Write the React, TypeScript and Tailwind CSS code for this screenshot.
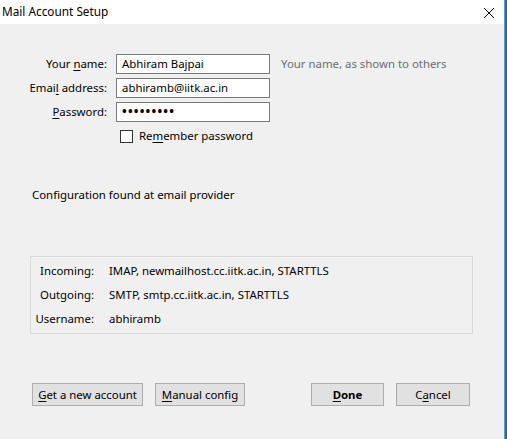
import React from "react";

const font = { fontFamily: '"Noto Sans", "Open Sans", sans-serif' };

function U({ children }: { children: React.ReactNode }) {
  return <span className="underline underline-offset-2">{children}</span>;
}

function Btn({ children, className = "" }: { children: React.ReactNode; className?: string }) {
  return (
    <div
      className={
        "h-[23px] flex items-center justify-center border border-[#adadad] bg-[#e1e1e1] text-[11.4px] leading-[16px] text-black " +
        className
      }
    >
      {children}
    </div>
  );
}

export default function App() {
  return (
    <div className="w-[507px] h-[439px] flex bg-[#f0f0f0] overflow-hidden" style={font}>
      <div className="flex-1 flex flex-col">
        {/* title bar */}
        <div className="h-[24px] bg-white flex items-center justify-between pl-[2px] pr-[9px]">
          <span className="text-[11.8px] text-black leading-none">Mail Account Setup</span>
          <svg width="12" height="12" viewBox="0 0 12 12" className="mt-[1px]">
            <path d="M1 1 L11 11 M11 1 L1 11" stroke="#000" strokeWidth="1" />
          </svg>
        </div>

        {/* body */}
        <div className="flex-1 flex flex-col pt-[30px] text-[11.4px] leading-[16px] text-black">
          <div className="flex flex-col gap-[4px]">
            <div className="flex items-center h-[20px]">
              <div className="w-[107px] text-right">
                Your <U>n</U>ame:
              </div>
              <div className="ml-[9px] w-[154px] h-[20px] border border-[#7a7a7a] bg-white flex items-center px-[5px]">
                Abhiram Bajpai
              </div>
              <div className="ml-[11px] text-[#6d6d6d]">Your name, as shown to others</div>
            </div>
            <div className="flex items-center h-[20px]">
              <div className="w-[107px] text-right">
                Emai<U>l</U> address:
              </div>
              <div className="ml-[9px] w-[154px] h-[20px] border border-[#7a7a7a] bg-white flex items-center px-[5px]">
                abhiramb@iitk.ac.in
              </div>
            </div>
            <div className="flex items-center h-[20px]">
              <div className="w-[107px] text-right">
                <U>P</U>assword:
              </div>
              <div className="ml-[9px] w-[154px] h-[20px] border border-[#7a7a7a] bg-white flex items-center px-[5px] font-bold tracking-[1.2px] text-[12.5px]">
                •••••••••
              </div>
            </div>
          </div>

          <div className="flex items-center h-[16px] mt-[6px] ml-[120px]">
            <div className="w-[13px] h-[13px] border border-[#333] bg-white" />
            <span className="ml-[6px]">
              Re<U>m</U>ember password
            </span>
          </div>

          <div className="mt-[43px] ml-[32px] h-[16px]">Configuration found at email provider</div>

          <div className="mt-[53px] ml-[30px] w-[443px] border border-[#d9d9d9] py-[2px]">
            <div className="flex items-center h-[24px]">
              <div className="w-[63px] text-right">Incoming:</div>
              <div className="ml-[15px]">IMAP, newmailhost.cc.iitk.ac.in, STARTTLS</div>
            </div>
            <div className="flex items-center h-[24px]">
              <div className="w-[63px] text-right">Outgoing:</div>
              <div className="ml-[15px]">SMTP, smtp.cc.iitk.ac.in, STARTTLS</div>
            </div>
            <div className="flex items-center h-[24px]">
              <div className="w-[63px] text-right">Username:</div>
              <div className="ml-[15px]">abhiramb</div>
            </div>
          </div>

          <div className="mt-[49px] flex items-center">
            <Btn className="ml-[32px] w-[111px]">
              <U>G</U>et a new account
            </Btn>
            <Btn className="ml-[12px] w-[90px]">
              <U>M</U>anual config
            </Btn>
            <Btn className="ml-[66px] w-[73px] font-bold">
              <U>D</U>one
            </Btn>
            <Btn className="ml-[12px] w-[74px]">
              C<U>a</U>ncel
            </Btn>
          </div>
        </div>
      </div>
      <div className="w-[3px] bg-[#1a6fc0] border-l border-[#5b9bd5]" />
    </div>
  );
}
